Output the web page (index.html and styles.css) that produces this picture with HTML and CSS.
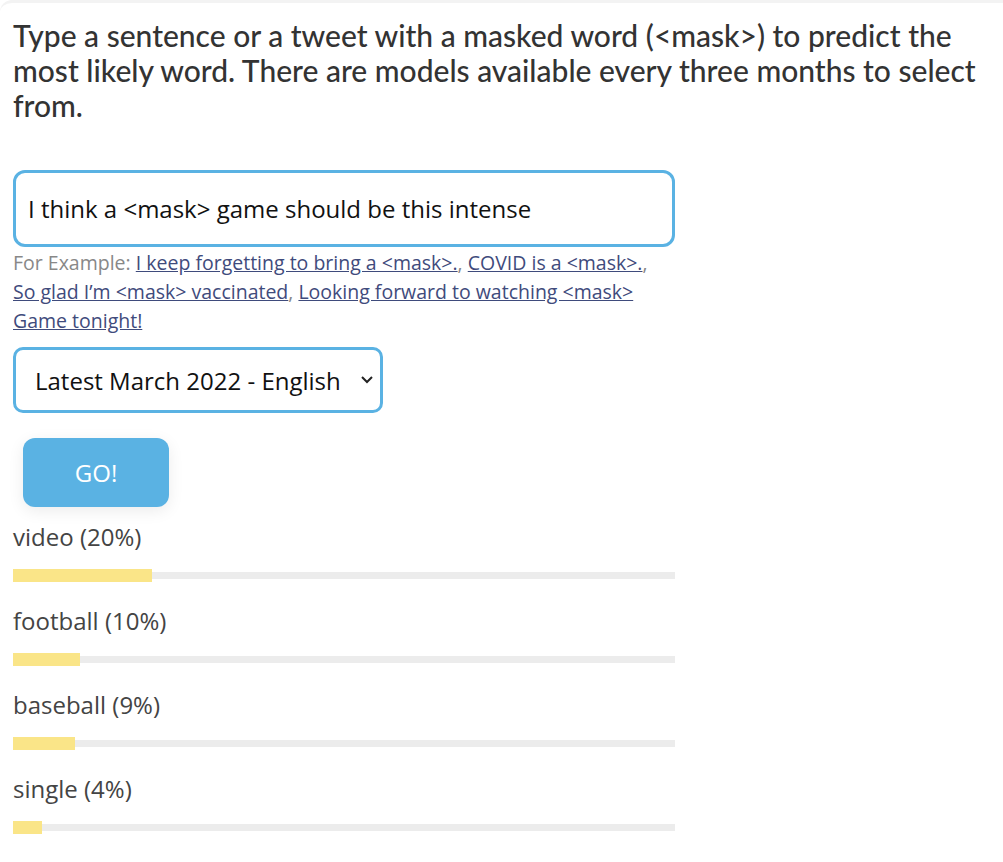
FILE: index.html
```html
<!DOCTYPE html>
<html lang="en">
<head>
    <meta charset="UTF-8">
    <meta name="viewport" content="width=device-width, initial-scale=1.0">
    <title>Masked Word Prediction</title>
    <link rel="stylesheet" href="styles.css">
</head>
<body>
    <div class="container">
        <h2 class="intro">Type a sentence or a tweet with a masked word (&lt;mask&gt;) to predict the most likely word. There are models available every three months to select from.</h2>

        <form class="mask-form">
            <input type="text" class="text-input" value="I think a &lt;mask&gt; game should be this intense">
            <div class="examples">
                For Example: <a href="#">I keep forgetting to bring a &lt;mask&gt;.</a>, <a href="#">COVID is a &lt;mask&gt;.</a>, <a href="#">So glad I’m &lt;mask&gt; vaccinated</a>, <a href="#">Looking forward to watching &lt;mask&gt; Game tonight!</a>
            </div>
            <div class="select-wrap">
                <select class="model-select">
                    <option>Latest March 2022 - English</option>
                </select>
                <svg class="chevron" width="14" height="9" viewBox="0 0 14 9">
                    <path d="M2 2 L7 7 L12 2" fill="none" stroke="#222" stroke-width="2"/>
                </svg>
            </div>
            <button type="button" class="go-btn">GO!</button>
        </form>

        <div class="results">
            <div class="result">
                <div class="result-label">video (20%)</div>
                <div class="bar"><div class="bar-fill" style="width: 21%"></div></div>
            </div>
            <div class="result">
                <div class="result-label">football (10%)</div>
                <div class="bar"><div class="bar-fill" style="width: 10.1%"></div></div>
            </div>
            <div class="result">
                <div class="result-label">baseball (9%)</div>
                <div class="bar"><div class="bar-fill" style="width: 9.4%"></div></div>
            </div>
            <div class="result">
                <div class="result-label">single (4%)</div>
                <div class="bar"><div class="bar-fill" style="width: 4.4%"></div></div>
            </div>
        </div>
    </div>
</body>
</html>
```

FILE: styles.css
```css
body {
    font-family: "Open Sans", Arial, sans-serif;
    background-color: #fff;
    margin: 0;
    padding: 0;
}

.container {
    padding: 0 13px 20px 13px;
    border-top: 3px solid #f3f3f3;
    border-radius: 12px 0 0 0;
}

.intro {
    font-family: Lato, "Open Sans", sans-serif;
    font-weight: 500;
    font-size: 30px;
    line-height: 35px;
    color: #333;
    margin: 15px 0 47px 0;
}

.mask-form {
    width: 662px;
}

.text-input {
    box-sizing: border-box;
    width: 662px;
    height: 77px;
    border: 3px solid #5ab2e3;
    border-radius: 12px;
    padding: 0 12px;
    font-family: "Open Sans", sans-serif;
    font-size: 24px;
    color: #111;
    outline: none;
}

.examples {
    font-size: 19.5px;
    line-height: 29px;
    color: #888;
    margin-top: 1px;
}

.examples a {
    color: #3f4b7c;
}

.select-wrap {
    position: relative;
    width: 370px;
    margin-top: 12px;
}

.model-select {
    display: block;
    box-sizing: border-box;
    width: 370px;
    height: 66px;
    border: 3px solid #5ab2e3;
    border-radius: 10px;
    padding: 0 14px 0 19px;
    font-family: "Open Sans", sans-serif;
    font-size: 24px;
    color: #111;
    background-color: #fff;
    appearance: none;
    -webkit-appearance: none;
}

.chevron {
    position: absolute;
    right: 9px;
    top: 28px;
}

.go-btn {
    display: block;
    width: 146px;
    height: 69px;
    margin: 25px 0 0 10px;
    background-color: #5ab2e3;
    color: #fff;
    border: none;
    border-radius: 12px;
    font-family: "Open Sans", sans-serif;
    font-size: 24px;
    box-shadow: 0 4px 16px rgba(0, 0, 0, 0.08);
    cursor: pointer;
}

.results {
    width: 662px;
    margin-top: 15px;
}

.result {
    height: 84px;
}

.result-label {
    font-size: 24px;
    line-height: 30px;
    color: #444;
}

.bar {
    position: relative;
    height: 7px;
    margin-top: 20px;
    background-color: #ececec;
}

.bar-fill {
    position: absolute;
    left: 0;
    top: -3px;
    height: 13px;
    background-color: #fae588;
}
```
